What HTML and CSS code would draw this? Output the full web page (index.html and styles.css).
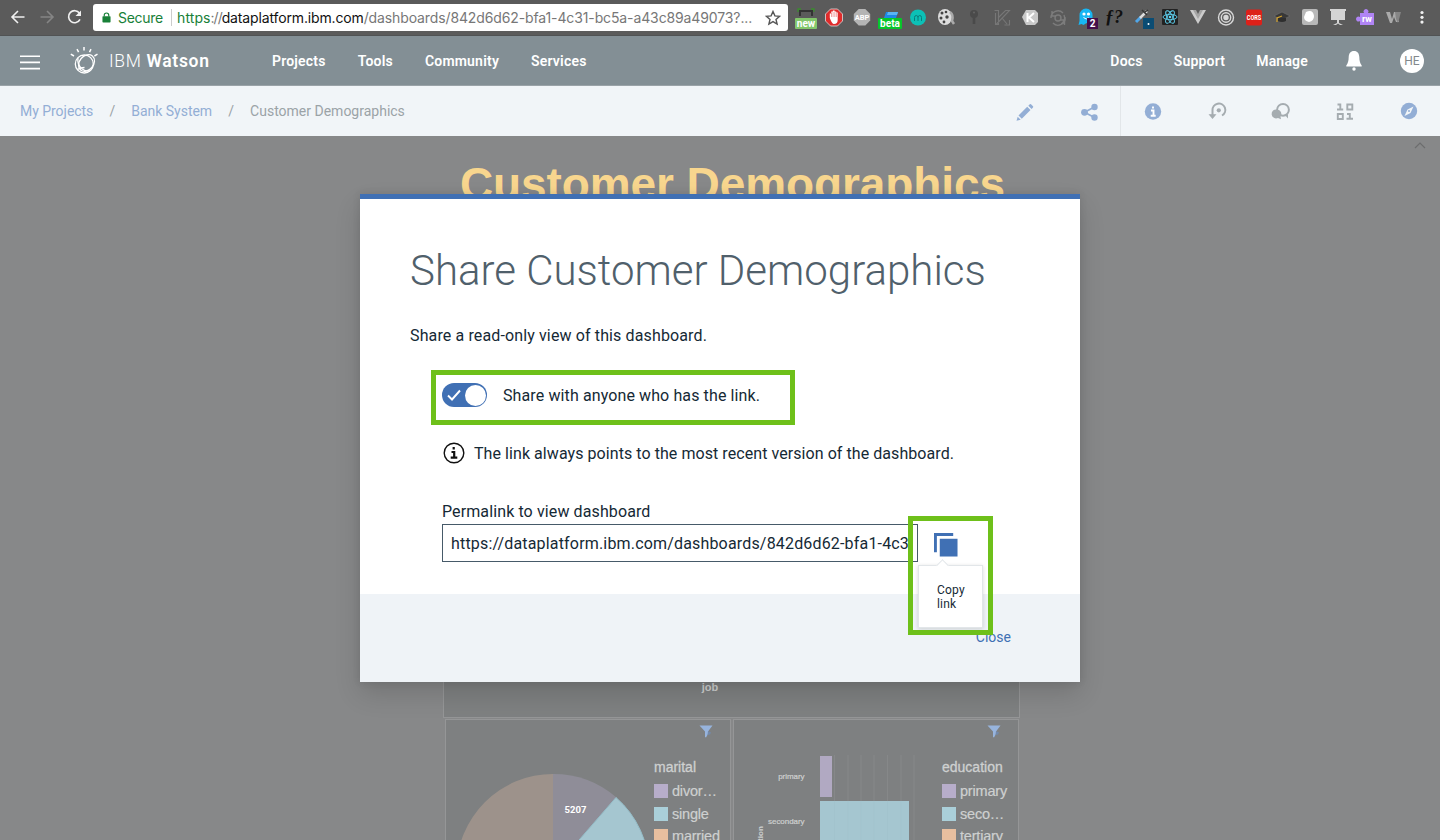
FILE: index.html
```html
<!DOCTYPE html>
<html lang="en">
<head>
<meta charset="utf-8">
<title>Customer Demographics</title>
<link rel="stylesheet" href="styles.css">
</head>
<body>
<div class="browser">
  <svg class="nav-icons" viewBox="0 0 93 36" fill="none" stroke="#f0f0f0" stroke-width="1.6">
    <path d="M24.500 17H12.500M18 11l-6 6 6 6"/>
    <path d="M40.500 17h12M47 11l6 6-6 6" stroke="#858585"/>
    <path d="M79.500 13.200A6 6 0 1 0 80 19.300"/><path d="M81 10.500v5.500h-5.500z" fill="#f0f0f0" stroke="none"/>
  </svg>
  <div class="address">
    <svg class="lock" viewBox="0 0 10 12"><path d="M2.500 5V3.500a2.500 2.500 0 0 1 5 0V5" fill="none" stroke="#188038" stroke-width="1.300"/><rect x=".5" y="4.500" width="9" height="7" rx=".8" fill="#188038"/></svg>
    <span class="secure">Secure</span>
    <span class="url"><span class="scheme">https</span><span class="sep">://</span><span class="host">dataplatform.ibm.com</span><span class="path">/dashboards/842d6d62-bfa1-4c31-bc5a-a43c89a49073?...</span></span>
    <svg class="star" viewBox="0 0 16 16" fill="none" stroke="#555" stroke-width="1.400"><path d="M8 1.500l1.900 4.400 4.700.4-3.600 3.100 1.100 4.600L8 11.600 3.900 14 5 9.400 1.400 6.300l4.700-.4z"/></svg>
  </div>
  <div class="extensions">
    <svg viewBox="0 0 28 36"><path d="M8 16v-5h12v5" fill="none" stroke="#333" stroke-width="2"/><path d="M6 12v-3h3M19 9h3v3" fill="none" stroke="#3a8d2e" stroke-width="1.300"/><rect x="3" y="18" width="22" height="11" rx="1" fill="#83c76c"/><text x="14" y="27" class="badge">new</text></svg>
    <svg viewBox="0 0 28 36"><path d="M10.500 9h7l5 5v7l-5 5h-7l-5-5v-7z" fill="#e02b2b" stroke="#ddd" stroke-width=".8"/><path d="M9.800 18v-4.500h1.500V11.500h1.600v-1h1.700v1h1.600v1h1.500v7.500q0 4-3.700 4-2 0-4.200-6z" fill="#fff"/><path d="M11.500 13v4M13.100 12v5M14.800 12v5M16.400 13v4" stroke="#e02b2b" stroke-width=".4"/></svg>
    <svg viewBox="0 0 28 36"><path d="M10.700 9h6.600l4.900 4.900v6.600l-4.900 4.900h-6.600l-4.900-4.900v-6.600z" fill="#b4b4b4"/><text x="14" y="20" class="abp">ABP</text></svg>
    <svg viewBox="0 0 28 36"><path d="M10 12h12l-2 6H8z" fill="#1e88e5"/><path d="M12 12h10l-1 3h-10z" fill="#59b5f4"/><rect x="2" y="18" width="24" height="11" rx="1" fill="#06c62a"/><text x="14" y="27" class="badge">beta</text></svg>
    <svg viewBox="0 0 28 36"><circle cx="14" cy="17.500" r="8" fill="#0cc0b6"/><path d="M10.500 21v-3.500q0-2 1.750-2t1.750 2V21m0-3.500q0-2 1.750-2t1.750 2V21" fill="none" stroke="#087e7b"/></svg>
    <svg viewBox="0 0 28 36"><ellipse cx="13" cy="17" rx="7" ry="8" fill="#ddd"/><g fill="#444"><circle cx="10" cy="13" r="1.500"/><circle cx="14" cy="12" r="1.300"/><circle cx="9" cy="18" r="1.500"/><circle cx="15" cy="17" r="1.700"/><circle cx="12" cy="22" r="1.400"/></g><path d="M18 12q4 3 2 9l2 3" stroke="#aaa" stroke-width="2.500" fill="none"/></svg>
    <svg viewBox="0 0 28 36"><circle cx="14" cy="14" r="4" fill="#4a4a4a"/><path d="M12.700 16h2.600v8h-2.600z" fill="#4a4a4a"/><circle cx="14" cy="12.500" r="1" fill="#666"/></svg>
    <svg viewBox="0 0 28 36" fill="none" stroke="#777" stroke-width="1.100"><path d="M6.500 10.500h4v14h-3V13M10 18l7.500-7.500h4L8 24.500M14 18l5 6M21.500 20v5h-5"/></svg>
    <svg viewBox="0 0 28 36"><path d="M10 10h9l3 3v9l-3 3h-9l-4-8z" fill="#c9c9c9"/><path d="M11.500 13v9M18 13l-5 4.500 5 4.500" fill="none" stroke="#fff" stroke-width="2"/></svg>
    <svg viewBox="0 0 28 36" fill="none" stroke="#7c7c7c" stroke-width="1.400"><path d="M7 18a7 7 0 0 1 12-5M21 17a7 7 0 0 1-12 6M17 24a7 7 0 0 0 3-9M8 11v5h4M20.500 25v-5h-4"/><circle cx="14" cy="18" r="3"/></svg>
    <svg viewBox="0 0 28 36"><path d="M7.500 15a6.500 6.500 0 0 1 13 0v8h-2l-2 2-2-2-3 2-2-1-3 1q1.500-4 1-10z" fill="#18b7f4"/><circle cx="12" cy="14" r="1.600" fill="#fff"/><circle cx="16.500" cy="14" r="1.600" fill="#fff"/><path d="M11.500 17.500q3 3 5 0" stroke="#fff" fill="none"/><rect x="15" y="18" width="11" height="11" fill="#43104b"/><text x="20.500" y="27" class="badge">2</text></svg>
    <svg viewBox="0 0 28 36"><text x="14" y="23" class="fq">ƒ?</text></svg>
    <svg viewBox="0 0 28 36"><path d="M8 22l5-5" stroke="#50a6e8" stroke-width="3"/><path d="M12 18l7-7" stroke="#ddd" stroke-width="2.500"/><path d="M14 10l5 5M17 12l3-2" stroke="#353535" stroke-width="1.500"/><rect x="15" y="18" width="11" height="11" fill="#0b4c73"/><circle cx="20.500" cy="24" r="1" fill="#fff"/></svg>
    <svg viewBox="0 0 28 36"><rect x="6" y="9" width="16" height="16" rx="1" fill="#222"/><g fill="none" stroke="#5fd3f3" stroke-width=".9"><ellipse cx="14" cy="17" rx="7" ry="2.700"/><ellipse cx="14" cy="17" rx="7" ry="2.700" transform="rotate(60 14 17)"/><ellipse cx="14" cy="17" rx="7" ry="2.700" transform="rotate(120 14 17)"/></g><circle cx="14" cy="17" r="1.300" fill="#5fd3f3"/></svg>
    <svg viewBox="0 0 28 36"><path d="M6 10h5l3 6 3-6h5l-8 14z" fill="#ccc"/><path d="M9 10h3l2 4 2-4h3l-5 9z" fill="#a5a5a5"/></svg>
    <svg viewBox="0 0 28 36" fill="none" stroke="#d8d8d8" stroke-width="1.400"><circle cx="14" cy="17.500" r="7.500"/><circle cx="14" cy="17.500" r="4.700"/><circle cx="14" cy="17.500" r="2" fill="#d8d8d8"/></svg>
    <svg viewBox="0 0 28 36"><rect x="6" y="9.500" width="16" height="16" rx="2.500" fill="#dd2019"/><text class="cors" transform="translate(14 20) scale(.8 1.150)">CORS</text></svg>
    <svg viewBox="0 0 28 36"><path d="M14 12l8 4-8 4-8-4z" fill="#383838" stroke="#777" stroke-width=".5"/><path d="M10 18v3q4 2 8 0v-3" fill="#2e2e2e"/><path d="M14 16l-5 2v4" fill="none" stroke="#d2a12b" stroke-width="1.200"/></svg>
    <svg viewBox="0 0 28 36"><rect x="6" y="9" width="16" height="16" rx="2" fill="#b8b8b8"/><path d="M10 12q7-3 8 4 0 5-5 6-5-1-5-5z" fill="#fff"/></svg>
    <svg viewBox="0 0 28 36" fill="#d4d4d4"><path d="M6 9h16v2h-1v9H7v-9H6zM13 20h2v3l4 2h-3l-2-1.500-2 1.500H9l4-2z"/></svg>
    <svg viewBox="0 0 28 36"><path d="M8 13h4a2.500 2.500 0 1 1 4 0h6v12H8v-4a2.500 2.500 0 1 1 0-4z" fill="#b084f5"/><text x="15" y="22" class="rw">rw</text></svg>
    <svg viewBox="0 0 28 36"><path d="M6 12h4l2 7 2-7h2l3 10h-3l-2-5-2 6h-2z" fill="#aaa"/><path d="M15 12h6l-3 11-2-4z" fill="#858585"/></svg>
    <svg viewBox="0 0 28 36" fill="#f2f2f2"><circle cx="14" cy="12.500" r="1.600"/><circle cx="14" cy="17.300" r="1.600"/><circle cx="14" cy="22.100" r="1.600"/></svg>
  </div>
</div>

<header class="header">
  <svg class="menu" viewBox="0 0 20 15"><path d="M0 1.200h20M0 7.400h20M0 13.600h20" stroke="#fff" stroke-width="1.600"/></svg>
  <svg class="logo" viewBox="0 0 30 28" fill="none" stroke="#fff" stroke-width="1.300">
    <circle cx="14.300" cy="17" r="9"/><ellipse cx="16.500" cy="16" rx="7" ry="9.200" transform="rotate(40 16.500 16)"/><path d="M8 11q-1 6 3.500 10.500 4.500 3.500 8.500 2.500M7.500 22.500q3-2 7-2"/>
    <path d="M7 2.200l1.600 3M14 0v3.500M21 2.200l-1.500 3M.8 7.200L4 9M27.500 7.200L24.400 9" stroke-width="1.500"/>
  </svg>
  <span class="brand">IBM <b>Watson</b></span>
  <nav class="nav"><a>Projects</a><a>Tools</a><a>Community</a><a>Services</a></nav>
  <nav class="nav nav-right"><a>Docs</a><a>Support</a><a>Manage</a></nav>
  <svg class="bell" viewBox="0 0 16 20" fill="#fff"><path d="M8 0C4.500 0 2.800 2.600 2.700 6 2.600 10 2 12 .3 14.500v1h15.400v-1C14 12 13.400 10 13.300 6 13.200 2.600 11.500 0 8 0z"/><circle cx="8" cy="18" r="1.700"/></svg>
  <span class="avatar">HE</span>
</header>

<div class="subbar">
  <div class="crumbs"><a>My Projects</a><i>/</i><a>Bank System</a><i>/</i><span>Customer Demographics</span></div>
  <div class="tools">
    <svg viewBox="0 0 64 50" fill="#93aed5"><path d="M26.500 29.500l8.700-8.700 3.300 3.300-8.700 8.700zM36.300 19.700l1.500-1.500q.6-.4 1.200 0l2 2q.5.600 0 1.200L39.600 23zM25.700 30.700l3 3-4.200 1.100z"/></svg>
    <svg viewBox="0 0 64 50"><g fill="#93aed5"><circle cx="28.500" cy="26.300" r="3.400"/><circle cx="38.500" cy="21" r="3.200"/><circle cx="38.500" cy="31.500" r="3.200"/></g><path d="M38.500 21l-10 5.300 10 5.200" stroke="#93aed5" stroke-width="1.800" fill="none"/></svg>
  </div>
  <div class="tools tools-side">
    <svg viewBox="0 0 64 50"><circle cx="32" cy="25.500" r="8.200" fill="#93aed5"/><path d="M32 20.500v2M30 24.500h2.500v5M29.700 29.800h5" stroke="#fff" stroke-width="1.900" fill="none"/></svg>
    <svg viewBox="0 0 64 50" fill="none" stroke="#a5acb0" stroke-width="2"><path d="M27.500 31V24.300a6.400 6.400 0 1 1 9.500 5.200"/><path d="M24.800 28.800l2.700 3.200 2.700-3.200z" fill="#a5acb0" stroke-width="1.200"/><circle cx="33.800" cy="24.300" r="2.100" fill="#a5acb0" stroke="none"/></svg>
    <svg viewBox="0 0 64 50"><circle cx="34" cy="23.800" r="5.900" fill="none" stroke="#a5acb0" stroke-width="2"/><path d="M35.500 28.500h3.500v4z" fill="#a5acb0"/><path d="M28 23.500a4.500 4.500 0 1 0 1 8.500l3 1.200-.5-2.500a4.500 4.500 0 0 0-3.500-7.200z" fill="#a5acb0"/></svg>
    <svg viewBox="0 0 64 50" fill="none" stroke="#a5acb0" stroke-width="1.900"><path d="M24.500 18.500h2.800v5.500M24 23.500h6.200M34.300 18.500h5v5h-5zM24.800 28h5v5h-5zM34 28h2.800v5M33.500 32.800h6.500"/></svg>
    <svg viewBox="0 0 64 50"><circle cx="32" cy="25" r="8.200" fill="#93aed5"/><path d="M36.500 20.500l-3 6.500-6 3 3-6.500z" fill="#f1f5f8"/><circle cx="32" cy="25" r="1" fill="#93aed5"/></svg>
  </div>
</div>

<main class="dashboard">
  <svg class="chevron" viewBox="0 0 12 7"><path d="M1 6l5-5 5 5" fill="none" stroke="#6c6d6e" stroke-width="1.200"/></svg>
  <div class="board">
    <h1 class="board-title">Customer Demographics</h1>
    <section class="card wide"><span class="axis">job</span></section>
    <div class="cards">
      <section class="card small">
        <svg class="chart" viewBox="0 0 206 121">
          <path d="M107 150V54A96.500 96.500 0 0 0 107 247z" fill="#9d928b"/>
          <path d="M107 150V54A96.500 96.500 0 0 1 170.500 77.500z" fill="#8f8d98"/>
          <path d="M107 150L170 77.500A96.500 96.500 0 0 1 203 150z" fill="#a5c6d0" stroke="#94bdc8"/>
          <text x="129.500" y="93" class="value">5207</text>
        </svg>
        <div class="legend">
          <svg class="filter" viewBox="0 0 14 13"><path d="M.5.500h13L9 6.500V9l-2 3.500L6 12V6.500z" fill="#97b4dd"/><path d="M9 6l3 1.500-1 2-2.500.5z" fill="#7389aa"/></svg>
          <h2>marital</h2>
          <p><i class="purple"></i>divor…</p><p><i class="aqua"></i>single</p><p><i class="peach"></i>married</p>
        </div>
      </section>
      <section class="card small">
        <svg class="chart" viewBox="0 0 206 121">
          <path d="M100.500 35v86M114 35v86M127 35v86M140 35v86M153.500 35v86M167 35v86M180 35v86" stroke="#868889"/>
          <rect x="86" y="36" width="12" height="41" fill="#b1a9c2"/><rect x="86" y="81" width="89" height="40" fill="#a5c6d0"/>
          <path d="M100.500 81v40M114 81v40M127 81v40M140 81v40M153.500 81v40M167 81v40" stroke="#a2c3cd"/>
          <text x="70.500" y="59" class="tick">primary</text><text x="70.500" y="104" class="tick">secondary</text>
          <text class="ytitle" transform="translate(29 144) rotate(-90)">education</text>
        </svg>
        <div class="legend">
          <svg class="filter" viewBox="0 0 14 13"><path d="M.5.500h13L9 6.500V9l-2 3.500L6 12V6.500z" fill="#97b4dd"/><path d="M9 6l3 1.500-1 2-2.500.5z" fill="#7389aa"/></svg>
          <h2>education</h2>
          <p><i class="purple"></i>primary</p><p><i class="aqua"></i>seco…</p><p><i class="peach"></i>tertiary</p>
        </div>
      </section>
    </div>
  </div>
</main>

<div class="modal">
  <div class="modal-body">
    <h2 class="modal-title">Share Customer Demographics</h2>
    <p class="lead">Share a read-only view of this dashboard.</p>
    <div class="share">
      <div class="switch-row">
        <span class="switch"><svg viewBox="0 0 14 12"><path d="M1 6.500l4 4 8-9" fill="none" stroke="#fff" stroke-width="1.900"/></svg><i></i></span>
        <span>Share with anyone who has the link.</span>
      </div>
      <div class="info-row">
        <svg viewBox="0 0 22 22" fill="none" stroke="#111"><circle cx="11" cy="11" r="9.800" stroke-width="1.400"/><path d="M10.700 5v2.400M8.500 10h2.700v5.500M7.700 15.700h6.600" stroke-width="2.200"/></svg>
        <span>The link always points to the most recent version of the dashboard.</span>
      </div>
      <label class="field-label">Permalink to view dashboard</label>
      <div class="field-row">
        <div class="field">https://dataplatform.ibm.com/dashboards/842d6d62-bfa1-4c3</div>
        <svg class="copy" viewBox="0 0 25 25" fill="#4070b4"><path d="M0 0h20v3H3v17H0z"/><path d="M6 6h18.500v18.500H6z"/></svg>
      </div>
    </div>
  </div>
  <div class="modal-footer"><a>Close</a></div>
  <div class="tip">Copy<br>link</div>
  <div class="mark mark-switch"></div>
  <div class="mark mark-copy"></div>
</div>
</body>
</html>
```
FILE: styles.css
```css
* { box-sizing: border-box; }
body { margin: 0; width: 1440px; height: 840px; overflow: hidden; position: relative; font-family: Roboto, sans-serif; color: #152935; }
h1, h2, p { margin: 0; }
svg { display: block; flex: none; }
.browser { height: 36px; background: #5b5b5b; display: flex; align-items: center; border-bottom: 1px solid #515354; }
.nav-icons { width: 93px; height: 36px; }
.address { width: 695px; height: 27px; background: #fff; border-radius: 3px; display: flex; align-items: center; padding-left: 9px; font: 14px Inter, sans-serif; white-space: nowrap; }
.lock { width: 9px; height: 11px; }
.secure { color: #188038; width: 53px; margin-left: 7px; letter-spacing: -.27px; }
.url { border-left: 1px solid #ccc; padding-left: 5px; width: 590px; color: #777; }
.scheme { color: #188038; letter-spacing: .1px; }
.sep { letter-spacing: -1px; }
.host { color: #111; letter-spacing: -.144px; }
.path { letter-spacing: -.12px; }
.star { width: 16px; height: 16px; margin-left: 4px; }
.extensions { display: flex; margin-left: 4px; }
.extensions svg { width: 28px; height: 36px; }
.extensions text { text-anchor: middle; font-family: Roboto, sans-serif; fill: #fff; }
.extensions .badge { font-size: 10px; font-weight: 700; }
.extensions .abp { font-size: 7.500px; font-weight: 700; }
.extensions .fq { font: italic 700 18px "Liberation Serif", serif; fill: #111; }
.extensions .cors { font-size: 7px; font-weight: 700; }
.extensions .rw { font-size: 9px; font-weight: 700; }
.header { height: 50px; background: #838f95; border-bottom: 1px solid #9aa3a8; display: flex; align-items: center; padding: 0 16px 0 20px; color: #fff; }
.menu { width: 20px; height: 15px; margin-top: 3px; }
.logo { width: 30px; height: 28px; margin-left: 30px; }
.brand { margin-left: 9px; width: 163px; font-size: 17.500px; font-weight: 300; letter-spacing: .68px; }
.brand b { font-weight: 600; }
.nav { display: flex; gap: 32px; font-size: 14px; font-weight: 600; letter-spacing: .2px; }
.nav-right { margin-left: auto; gap: 31px; }
.bell { width: 16px; height: 20px; margin-left: 38px; }
.avatar { width: 24px; height: 24px; border-radius: 50%; background: #fff; color: #83898d; font-size: 12px; line-height: 24px; text-align: center; margin-left: 38px; }
.subbar { height: 50px; background: #f1f5f8; display: flex; font-size: 14px; color: #9ba3a7; }
.crumbs { flex: 1; display: flex; align-items: center; padding-left: 20px; }
.crumbs a { color: #93aed5; letter-spacing: -.03px; }
.crumbs i { font-style: normal; width: 38px; text-align: center; }
.tools { display: flex; }
.tools svg { width: 64px; height: 50px; }
.tools-side { border-left: 1px solid #e2e6e9; margin-right: -1px; }
.dashboard { height: 704px; background: #878889; overflow: hidden; position: relative; }
.chevron { width: 12px; height: 7px; position: absolute; right: 14px; top: 6px; }
.board { width: 577px; margin-left: 443px; }
.board-title { font: 700 46px/56px "Liberation Sans", sans-serif; letter-spacing: -.1px; color: #f8d68e; padding: 20px 0 0 17px; height: 76px; white-space: nowrap; }
.card { background: #7e8081; border: 1px solid #959697; font-family: "Liberation Sans", sans-serif; color: #ced0d0; }
.wide { height: 506px; display: flex; align-items: flex-end; justify-content: center; padding: 0 43px 24px 0; }
.axis { font-size: 11px; font-weight: 700; }
.cards { display: grid; grid-template-columns: 286px 286px; gap: 2px; margin: 1px 0 0 2px; }
.small { height: 130px; display: flex; }
.chart { width: 206px; height: 121px; }
.legend { white-space: nowrap; font-size: 14.500px; padding-top: 5px; }
.filter { width: 14px; height: 13px; margin-left: 47px; }
.legend h2 { font-size: 14px; font-weight: 400; line-height: 18px; margin: 20px 0 4px 2px; -webkit-text-stroke: .3px #ced0d0; }
.legend p { display: flex; align-items: center; height: 22.400px; letter-spacing: -.2px; -webkit-text-stroke: .2px #ced0d0; }
.legend i { width: 14px; height: 14px; margin: 0 4px 0 2px; }
.purple { background: #b7adca; }
.aqua { background: #aacfd9; }
.peach { background: #e8bf9f; }
.value { font: 700 9.500px Roboto, sans-serif; text-anchor: middle; fill: #fff; }
.tick { font-size: 8px; text-anchor: end; fill: #ced0d0; stroke: #ced0d0; stroke-width: .2px; letter-spacing: -.05px; }
.ytitle { font-size: 8px; font-weight: 700; text-anchor: start; fill: #ced0d0; }
.modal { position: absolute; left: 360px; top: 194px; width: 720px; height: 488px; border-top: 5px solid #4070b4; background: #fff; box-shadow: 0 12px 24px rgba(0, 0, 0, .14), 0 0 8px rgba(0, 0, 0, .1); font-size: 16px; white-space: nowrap; letter-spacing: .11px; }
.modal-body { height: 395px; padding: 44px 50px 0; }
.modal-title { font-size: 42px; font-weight: 300; line-height: 56px; color: #50606b; letter-spacing: 0; }
.lead { line-height: 24px; margin-top: 25px; letter-spacing: .127px; }
.share { padding: 35px 0 0 32px; }
.switch-row { display: flex; align-items: center; gap: 16px; height: 24px; }
.switch { width: 45px; height: 24px; border-radius: 12px; background: #4070b4; display: flex; align-items: center; justify-content: space-between; padding: 0 1px 0 5px; }
.switch svg { width: 14px; height: 12px; }
.switch i { width: 21px; height: 21px; border-radius: 50%; background: #fff; }
.info-row { display: flex; align-items: center; gap: 9px; height: 24px; margin-top: 34px; padding-left: 1px; letter-spacing: .065px; }
.info-row svg { width: 22px; height: 22px; }
.field-label { display: block; line-height: 22px; margin-top: 36px; }
.field-row { display: flex; margin-top: 1px; }
.field { width: 476px; height: 38px; border: 1px solid #465a69; padding: 1px 0 0 8px; line-height: 36px; overflow: hidden; letter-spacing: .173px; }
.copy { width: 24px; height: 24px; margin: 9px 0 0 16px; }
.modal-footer { height: 88px; background: #eff3f7; padding: 34px 69px 0 0; text-align: right; font-size: 14px; line-height: 18px; color: #4070b4; letter-spacing: 0; }
.tip { position: absolute; left: 558px; top: 366px; width: 65px; height: 63px; background: #fff; border: 1px solid #e2e6e9; box-shadow: 0 1px 4px rgba(0, 0, 0, .15); padding: 17px 0 0 18px; font-size: 12px; line-height: 14px; letter-spacing: .2px; }
.tip::before { content: ""; position: absolute; left: 19px; top: -5px; width: 8px; height: 8px; background: #fff; border: solid #e2e6e9; border-width: 1px 0 0 1px; transform: rotate(45deg); }
.mark { position: absolute; border: 5px solid #6ec01a; }
.mark-switch { left: 71px; top: 171px; width: 364px; height: 55px; }
.mark-copy { left: 548px; top: 317px; width: 85px; height: 119px; }
```
